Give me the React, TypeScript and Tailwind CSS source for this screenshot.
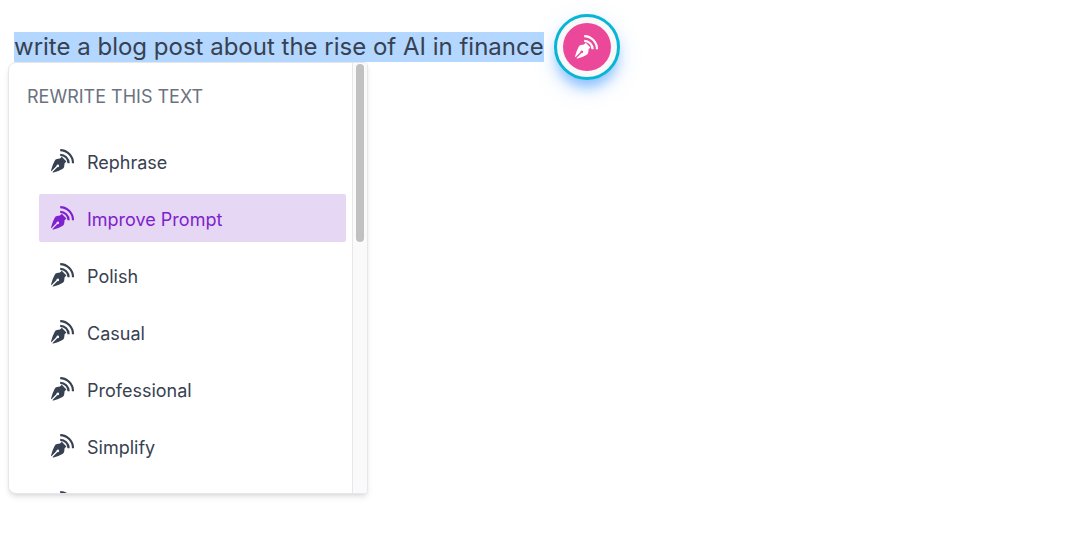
import { useState } from "react";
import clsx from "clsx";

const actions = ["Rephrase", "Improve Prompt", "Polish", "Casual", "Professional", "Simplify", "Expand"];

function PenIcon({ className }: { className?: string }) {
  return (
    <svg className={clsx("size-6 shrink-0", className)} viewBox="0 0 24 24" fill="none" aria-hidden="true">
      <path d="M9.2 1.2A13 13 0 0 1 22 14.2" stroke="currentColor" strokeWidth={2.2} />
      <path d="M9.2 5.8A8.4 8.4 0 0 1 17.6 14.2" stroke="currentColor" strokeWidth={2.2} />
      <path
        fill="currentColor"
        d="M10.8 7.8L15.4 12.4L13.6 14.2L13.2 17.4Q13 19 11.4 19.9Q7.6 21.9 2.6 23.6L1.3 23.3L6.5 18.1A1.3 1.3 0 1 0 5.5 17.1L.4 22.2L0 21.4Q1.6 15.4 3.6 11.9Q4.4 10.4 6 10.1L9 9.6Z"
      />
    </svg>
  );
}

export default function App() {
  const [active, setActive] = useState("Improve Prompt");

  return (
    <main className="min-h-screen bg-white px-3.5 pt-3.5 font-['Inter',sans-serif] text-[#374151]">
      <div className="relative flex items-center gap-2.5">
        <p className="bg-[#b3d7ff] text-2xl leading-[30px] whitespace-nowrap">
          write a blog post about the rise of AI in finance
        </p>
        <button
          type="button"
          aria-label="Rewrite selected text"
          className="flex size-[66px] shrink-0 items-center justify-center rounded-full border-3 border-[#06b6d4] bg-[#f8f8f8] shadow-[0_10px_12px_-3px_rgba(80,160,255,0.55),0_8px_22px_rgba(80,160,255,0.25)]"
        >
          <span className="flex size-12 items-center justify-center rounded-full bg-[#ec4899] text-white">
            <PenIcon />
          </span>
        </button>

        {/* Dropdown */}
        <div className="absolute top-12 -left-1.5 flex h-[432px] w-[360px] overflow-hidden rounded-l-lg rounded-r-sm border border-gray-200 bg-white shadow-md">
          <div className="min-w-0 flex-1 overflow-hidden pr-1.5 pl-[18px]">
            <h2 className="pt-5 text-lg leading-7 text-[#6b7280] uppercase">Rewrite this text</h2>
            <ul className="mt-[26px] space-y-[9px] pl-3">
              {actions.map((action) => (
                <li key={action}>
                  <button
                    type="button"
                    onClick={() => setActive(action)}
                    className={clsx(
                      "flex h-12 w-full items-center gap-3 rounded-xs px-3 text-left text-lg",
                      action === active ? "bg-[#e6d7f4] text-[#7e22ce]" : "text-[#374151]"
                    )}
                  >
                    <PenIcon />
                    <span className="pt-1">{action}</span>
                  </button>
                </li>
              ))}
            </ul>
          </div>
          {/* Scrollbar */}
          <div className="w-[15px] shrink-0 border-l border-gray-200 bg-[#fafafa] px-[3px] pt-px">
            <div className="h-[178px] w-2 rounded-full bg-[#c1c1c1]" />
          </div>
        </div>
      </div>
    </main>
  );
}
